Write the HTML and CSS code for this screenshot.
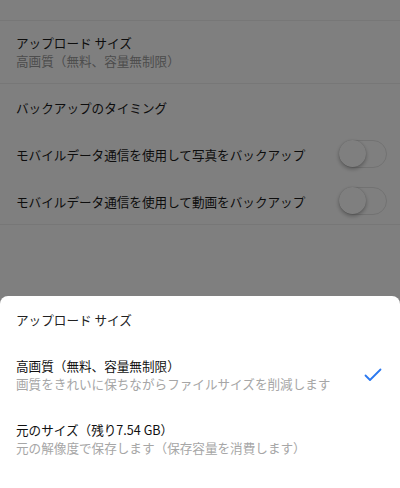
FILE: index.html
```html
<!DOCTYPE html>
<html lang="ja">
<head>
<meta charset="utf-8">
<link rel="stylesheet" href="styles.css">
</head>
<body>
<div class="page">
  <div class="top-space"></div>
  <div class="row setting">
    <div class="title">アップロード サイズ</div>
    <div class="sub">高画質（無料、容量無制限）</div>
  </div>
  <div class="section">
    <div class="section-head">バックアップのタイミング</div>
    <div class="toggle-row">
      <span class="title">モバイルデータ通信を使用して写真をバックアップ</span>
      <span class="switch"><span class="knob"></span></span>
    </div>
    <div class="toggle-row">
      <span class="title">モバイルデータ通信を使用して動画をバックアップ</span>
      <span class="switch"><span class="knob"></span></span>
    </div>
  </div>
</div>
<div class="overlay"></div>
<div class="sheet">
  <div class="sheet-title">アップロード サイズ</div>
  <div class="option">
    <div class="option-text">
      <div class="option-title">高画質（無料、容量無制限）</div>
      <div class="option-sub">画質をきれいに保ちながらファイルサイズを削減します</div>
    </div>
    <svg class="check" width="18" height="14" viewBox="0 0 18 14"><path d="M1.5 7.5 L6 12 L16.5 1.5" fill="none" stroke="#2a78f0" stroke-width="1.8" stroke-linecap="round" stroke-linejoin="round"/></svg>
  </div>
  <div class="option">
    <div class="option-text">
      <div class="option-title">元のサイズ（残り7.54 GB）</div>
      <div class="option-sub">元の解像度で保存します（保存容量を消費します）</div>
    </div>
  </div>
</div>
</body>
</html>
```

FILE: styles.css
```css
* { box-sizing: border-box; }
html, body { margin: 0; padding: 0; }
body {
  width: 400px;
  height: 488px;
  overflow: hidden;
  background: #fff;
  font-family: "Noto Sans CJK JP", "Noto Sans", sans-serif;
  font-size: 12.6px;
  color: #1a1a1a;
  position: relative;
}
.page { display: flex; flex-direction: column; }
.top-space { height: 21px; border-bottom: 1px solid #eeeeee; }
.setting {
  padding: 13px 16px 13px;
  border-bottom: 1px solid #eeeeee;
  line-height: 18px;
}
.setting .sub { color: #9a9a9a; }
.section { border-bottom: 1px solid #eeeeee; }
.section-head { height: 46px; line-height: 46px; padding: 1px 16px 0; }
.toggle-row {
  height: 47px;
  display: flex;
  align-items: center;
  justify-content: space-between;
  padding: 1px 13px 0 16px;
}
.switch {
  width: 48px;
  height: 28px;
  border-radius: 14px;
  border: 1.5px solid #e4e4e4;
  background: #fff;
  position: relative;
  display: block;
}
.knob {
  position: absolute;
  left: -1px;
  top: -1px;
  width: 27px;
  height: 27px;
  border-radius: 50%;
  background: #fff;
  box-shadow: 0 2px 4px rgba(0,0,0,0.3), 0 0 1px rgba(0,0,0,0.2);
}
.overlay {
  position: absolute;
  inset: 0;
  background: rgba(0,0,0,0.5);
}
.sheet {
  position: absolute;
  left: 0;
  right: 0;
  top: 296px;
  bottom: 0;
  background: #fff;
  border-radius: 8px 8px 0 0;
}
.sheet-title {
  padding: 15px 16px 0;
  line-height: 18px;
  height: 47px;
  color: #222;
}
.option {
  display: flex;
  align-items: center;
  justify-content: space-between;
  padding: 0 18px 0 16px;
  height: 64px;
}
.option-text { line-height: 18px; }
.option-title { color: #111; }
.option-sub { color: #a6a6a6; }
.check { display: block; }
```
